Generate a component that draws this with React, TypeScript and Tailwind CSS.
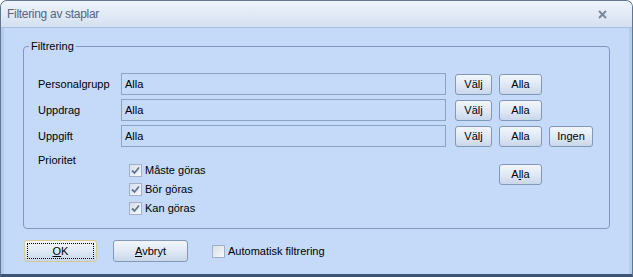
import React from "react";

function Btn({ w, children, h = "h-[21px]" }: { w: string; children: React.ReactNode; h?: string }) {
  return (
    <div
      className={`${w} ${h} shrink-0 flex items-center justify-center rounded-[3px] border border-[#8398b8] bg-gradient-to-b from-[#f2f6fb] via-[#e0e9f5] to-[#c9d7eb] text-[11px] text-black`}
    >
      {children}
    </div>
  );
}

function Check({ checked }: { checked: boolean }) {
  return (
    <span className="w-[13px] h-[13px] shrink-0 border border-[#9fb0c8] bg-gradient-to-br from-[#d9dfe7] to-[#f6f8fb] flex items-center justify-center">
      {checked && (
        <svg width="9" height="9" viewBox="0 0 9 9">
          <path d="M1 4.5 L3.5 7 L8 1.5" fill="none" stroke="#5f7494" strokeWidth="1.8" />
        </svg>
      )}
    </span>
  );
}

function Row({ label, extra }: { label: string; extra?: boolean }) {
  return (
    <div className="flex items-center h-[22px]">
      <div className="w-[83px] shrink-0">{label}</div>
      <div className="w-[325px] h-[22px] shrink-0 border border-[#8aa2c4] bg-[#c4daf8] flex items-center pl-[3px]">Alla</div>
      <div className="ml-[9px]">
        <Btn w="w-[37px]">Välj</Btn>
      </div>
      <div className="ml-[7px]">
        <Btn w="w-[43px]">Alla</Btn>
      </div>
      {extra && (
        <div className="ml-[7px]">
          <Btn w="w-[44px]">Ingen</Btn>
        </div>
      )}
    </div>
  );
}

export default function App() {
  return (
    <div className="w-[633px] h-[277px] flex flex-col bg-[#c4daf8] border border-[#62768f] border-b-[3px] border-b-[#3f5576] rounded-t-[7px] overflow-hidden font-['Liberation_Sans',Arial,sans-serif] text-[11px] leading-[13px] text-black">
      <div className="h-[27px] shrink-0 flex items-center justify-between pl-[6px] pr-[25px] bg-gradient-to-b from-[#eff4fb] to-[#d4e0f1] border-b border-[#a9bfdc]">
        <span className="text-[12px] tracking-[-0.3px] text-[#55667e]">Filtering av staplar</span>
        <svg width="9" height="9" viewBox="0 0 9 9">
          <path d="M1 1 L8 8 M8 1 L1 8" stroke="#7a889c" strokeWidth="2" />
        </svg>
      </div>
      <div className="flex-1 flex flex-col border-x-[3px] border-[#b5cdec] px-[19px] pt-[18px]">
        <div className="relative h-[183px] border border-[#7f98bd] rounded-[4px] pt-[26px] pl-[14px]">
          <span className="absolute -top-[7px] left-[5px] px-[2px] bg-[#c4daf8]">Filtrering</span>
          <div className="flex flex-col gap-[4px]">
            <Row label="Personalgrupp" />
            <Row label="Uppdrag" />
            <Row label="Uppgift" extra />
          </div>
          <div className="flex mt-[7px]">
            <div className="w-[91px] shrink-0">Prioritet</div>
            <div className="w-[370px] shrink-0 flex flex-col pt-[10px] gap-[6px]">
              <div className="flex items-center gap-[3px]">
                <Check checked />
                <span>Måste göras</span>
              </div>
              <div className="flex items-center gap-[3px]">
                <Check checked />
                <span>Bör göras</span>
              </div>
              <div className="flex items-center gap-[3px]">
                <Check checked />
                <span>Kan göras</span>
              </div>
            </div>
            <div className="mt-[10px]">
              <Btn w="w-[43px]">
                <span>
                  A<span className="underline">l</span>la
                </span>
              </Btn>
            </div>
          </div>
        </div>
        <div className="flex items-center mt-[11px] ml-[1px]">
          <div className="w-[73px] h-[22px] shrink-0 rounded-[3px] border border-[#d8c98e] bg-gradient-to-b from-[#f2f6fb] via-[#e0e9f5] to-[#c9d7eb] p-[2px]">
            <div className="w-full h-full border border-dotted border-black flex items-center justify-center">
              <span>
                <span className="underline">O</span>K
              </span>
            </div>
          </div>
          <div className="ml-[16px]">
            <Btn w="w-[75px]" h="h-[22px]">
              <span>
                <span className="underline">A</span>vbryt
              </span>
            </Btn>
          </div>
          <div className="ml-[24px] flex items-center gap-[3px]">
            <Check checked={false} />
            <span>Automatisk filtrering</span>
          </div>
        </div>
      </div>
    </div>
  );
}
